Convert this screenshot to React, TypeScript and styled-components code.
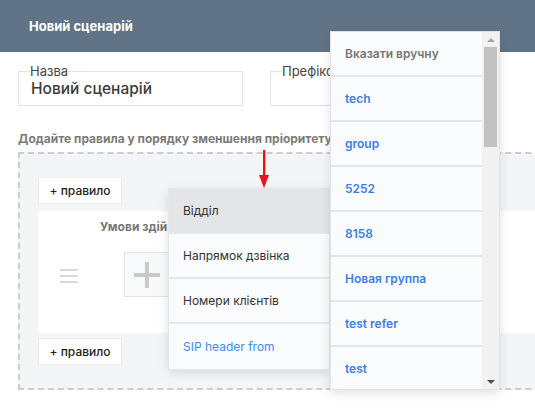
import React from 'react';
import styled, { createGlobalStyle } from 'styled-components';

const GlobalStyle = createGlobalStyle`
  html, body {
    margin: 0;
    padding: 0;
    overflow: hidden;
    background: #ffffff;
    font-family: Inter, "Noto Sans", sans-serif;
  }
`;

const departments = ['tech', 'group', '5252', '8158', 'Новая группа', 'test refer', 'test'];

const conditionItems = [
  { label: 'Відділ', active: true },
  { label: 'Напрямок дзвінка' },
  { label: 'Номери клієнтів' },
  { label: 'SIP header from', link: true },
];

export default function App() {
  return (
    <>
      <GlobalStyle />
      <Modal>
        <Header>
          <HeaderTitle>Новий сценарій</HeaderTitle>
        </Header>
        <Body>
          <FieldsRow>
            <Field $width={225}>
              <Legend>Назва</Legend>
              <FieldValue>Новий сценарій</FieldValue>
            </Field>
            <Field $width={220}>
              <Legend>Префікс</Legend>
              <FieldValue>&nbsp;</FieldValue>
            </Field>
          </FieldsRow>
          <Hint>Додайте правила у порядку зменшення пріоритету</Hint>
          <RulesBox>
            <AddRuleButton>+ правило</AddRuleButton>
            <RuleCard>
              <HandleCol>
                <Handle>
                  <span />
                  <span />
                  <span />
                </Handle>
              </HandleCol>
              <ConditionsCol>
                <CardTitle>Умови здій</CardTitle>
                <PlusBox>
                  <svg width="30" height="30" viewBox="0 0 30 30">
                    <rect x="13" y="2" width="4" height="26" fill="#c9c9c9" />
                    <rect x="2" y="13" width="26" height="4" fill="#c9c9c9" />
                  </svg>
                </PlusBox>
              </ConditionsCol>
            </RuleCard>
            <AddRuleButton>+ правило</AddRuleButton>
          </RulesBox>
        </Body>

        <Arrow width="12" height="40" viewBox="0 0 12 40">
          <rect x="5" y="0" width="2.4" height="28" fill="#e8141b" />
          <polygon points="1,25 11,25 6,38" fill="#e8141b" />
        </Arrow>

        <ConditionMenu>
          {conditionItems.map((item) => (
            <MenuItem key={item.label} $active={item.active} $link={item.link}>
              {item.label}
            </MenuItem>
          ))}
        </ConditionMenu>

        <ValueMenu>
          <ValueList>
            <ValueItem $muted>Вказати вручну</ValueItem>
            {departments.map((d) => (
              <ValueItem key={d}>{d}</ValueItem>
            ))}
          </ValueList>
          <Scrollbar>
            <ScrollArrow $up />
            <ScrollThumb />
            <ScrollSpacer />
            <ScrollArrow />
          </Scrollbar>
        </ValueMenu>
      </Modal>
    </>
  );
}

const Modal = styled.div`
  position: relative;
  width: 720px;
  height: 409px;
  background: #ffffff;
  box-shadow: 0 1px 2px rgba(0, 0, 0, 0.35);
`;

const Header = styled.div`
  height: 52px;
  background: #617487;
  display: flex;
  align-items: center;
  padding-left: 29px;
`;

const HeaderTitle = styled.h2`
  margin: 0;
  color: #ffffff;
  font-size: 13px;
  font-weight: 700;
`;

const Body = styled.div`
  padding: 13px 0 0 18px;
`;

const FieldsRow = styled.div`
  display: flex;
  gap: 27px;
`;

const Field = styled.fieldset<{ $width: number }>`
  box-sizing: border-box;
  width: ${(p) => p.$width}px;
  height: 41px;
  margin: 0;
  padding: 0 12px;
  border: 1px solid #e3e3e3;
`;

const Legend = styled.legend`
  padding: 0;
  margin-left: -1px;
  font-size: 13px;
  line-height: 12px;
  color: #444;
`;

const FieldValue = styled.div`
  font-size: 15.5px;
  line-height: 18px;
  font-weight: 500;
  color: #3b3b3b;
  margin-top: 3px;
`;

const Hint = styled.p`
  margin: 25px 0 0 0;
  font-size: 12px;
  line-height: 16px;
  font-weight: 700;
  color: #7b7b7b;
`;

const RulesBox = styled.div`
  margin-top: 5px;
  box-sizing: border-box;
  height: 238px;
  background: #f4f5f7;
  border: 2px dashed #c9cdd4;
  border-right: none;
  padding: 23px 0 0 18px;
  display: flex;
  flex-direction: column;
  align-items: flex-start;
`;

const AddRuleButton = styled.button`
  box-sizing: border-box;
  width: 84px;
  height: 27px;
  background: #ffffff;
  border: 1px solid #ececec;
  font-family: Inter, sans-serif;
  font-size: 12px;
  font-weight: 500;
  color: #222;
  padding: 0;
`;

const RuleCard = styled.div`
  align-self: stretch;
  height: 122px;
  margin: 7px 0 5px 0;
  background: #ffffff;
  display: flex;
`;

const HandleCol = styled.div`
  width: 62px;
  display: flex;
  align-items: center;
  justify-content: center;
  padding-top: 8px;
`;

const Handle = styled.div`
  display: flex;
  flex-direction: column;
  gap: 4px;
  span {
    display: block;
    width: 18px;
    height: 2px;
    background: #d6d9de;
  }
`;

const ConditionsCol = styled.div`
  display: flex;
  flex-direction: column;
`;

const CardTitle = styled.div`
  margin-top: 8px;
  font-size: 12px;
  font-weight: 700;
  color: #777;
  white-space: nowrap;
`;

const PlusBox = styled.div`
  box-sizing: border-box;
  margin: 18px 0 0 24px;
  width: 45px;
  height: 45px;
  background: #f8f9fb;
  border: 1px solid #e2e3e6;
  display: flex;
  align-items: center;
  justify-content: center;
`;

const Arrow = styled.svg`
  position: absolute;
  left: 258px;
  top: 150px;
`;

const ConditionMenu = styled.div`
  position: absolute;
  left: 168px;
  top: 188px;
  width: 162px;
  background: #fafbfd;
  box-shadow: 0 3px 10px rgba(0, 0, 0, 0.12);
  border: 1px solid #e6e7ea;
  box-sizing: border-box;
`;

const MenuItem = styled.div<{ $active?: boolean; $link?: boolean }>`
  height: 45px;
  box-sizing: border-box;
  display: flex;
  align-items: center;
  padding-left: 14px;
  font-size: 12px;
  color: ${(p) => (p.$link ? '#3d8ef3' : '#333')};
  background: ${(p) => (p.$active ? '#e4e5e7' : '#fafbfd')};
  border-bottom: 2px solid #e6e7ea;
  &:last-child {
    border-bottom: none;
  }
`;

const ValueMenu = styled.div`
  position: absolute;
  left: 330px;
  top: 31px;
  width: 170px;
  height: 359px;
  display: flex;
  background: #fafbfd;
  border: 1px solid #e3e4e7;
  box-sizing: border-box;
  box-shadow: 0 3px 10px rgba(0, 0, 0, 0.12);
`;

const ValueList = styled.div`
  flex: 1;
  overflow: hidden;
`;

const ValueItem = styled.div<{ $muted?: boolean }>`
  height: 45px;
  box-sizing: border-box;
  display: flex;
  align-items: center;
  padding-left: 14px;
  font-size: 12px;
  font-weight: 600;
  color: ${(p) => (p.$muted ? '#757575' : '#3b80e2')};
  border-bottom: 2px solid #e5e6e9;
`;

const Scrollbar = styled.div`
  width: 17px;
  background: #f1f1f1;
  display: flex;
  flex-direction: column;
  align-items: center;
`;

const ScrollArrow = styled.div<{ $up?: boolean }>`
  height: 15px;
  width: 17px;
  display: flex;
  align-items: center;
  justify-content: center;
  &::before {
    content: '';
    border-left: 4px solid transparent;
    border-right: 4px solid transparent;
    ${(p) =>
      p.$up ? 'border-bottom: 4px solid #a3a3a3;' : 'border-top: 4px solid #505050;'}
  }
`;

const ScrollThumb = styled.div`
  width: 13px;
  height: 100px;
  background: #c1c1c1;
`;

const ScrollSpacer = styled.div`
  flex: 1;
`;
